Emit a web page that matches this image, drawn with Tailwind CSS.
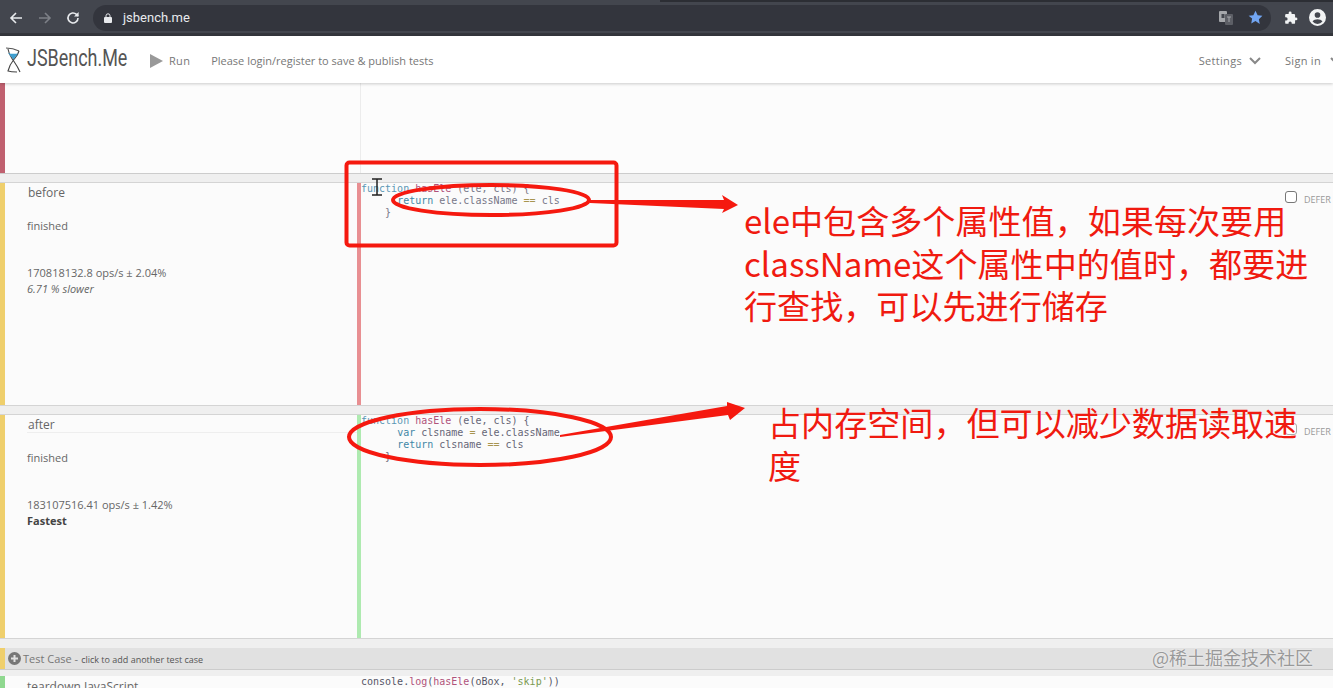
<!DOCTYPE html>
<html lang="zh">
<head>
  <meta charset="UTF-8" />
  <title>JSBench.Me</title>
  <script src="https://cdn.jsdelivr.net/npm/@tailwindcss/browser@4"></script>
</head>
<body class="relative w-[1333px] h-[688px] overflow-hidden bg-[#efefef] font-['Open_Sans',sans-serif] text-[#666]">

  <!-- browser bar -->
  <div class="relative h-[36px] bg-[#43464e] border-b-[3px] border-[#34363c] flex items-center">
    <div class="absolute right-0 top-0 w-[673px] h-[2px] bg-[#2c2e34]"></div>
    <div class="w-[93px] flex items-center pt-[2px]">
      <svg class="ml-[9px]" width="14" height="14" viewBox="0 0 14 14" fill="none" stroke="#e8eaed" stroke-width="1.6"><path d="M13 7H2M7 2 2 7l5 5"/></svg>
      <svg class="ml-[15px]" width="14" height="14" viewBox="0 0 14 14" fill="none" stroke="#7d8087" stroke-width="1.6"><path d="M1 7h11M7 2l5 5-5 5"/></svg>
      <svg class="ml-[14px]" width="14" height="14" viewBox="0 0 14 14" fill="none" stroke="#e8eaed" stroke-width="1.6"><path d="M12 7a5 5 0 1 1-1.5-3.6L12 5"/><path d="M12.6 1v4.6H8" fill="#e8eaed" stroke="none"/></svg>
    </div>
    <div class="w-[1178px] h-[26px] mt-[2px] rounded-full bg-[#33353d] flex items-center pl-[11px]">
      <svg width="8" height="10" viewBox="0 0 8 10"><path d="M1 4h6a1 1 0 0 1 1 1v4a1 1 0 0 1-1 1H1a1 1 0 0 1-1-1V5a1 1 0 0 1 1-1z" fill="#e8eaed"/><path d="M2 4V2.800a2 2 0 0 1 4 0V4" fill="none" stroke="#e8eaed"/></svg>
      <span class="ml-[11px] text-[13px] text-[#e8eaed] font-['Roboto',sans-serif]">jsbench.me</span>
      <div class="ml-auto mr-[8px] flex items-center gap-[15px]">
        <svg width="14" height="14" viewBox="0 0 14 14"><rect width="8" height="11" rx="1" fill="#a5a7ab"/><rect x="2.500" y="3" width="3" height="4" fill="#43464e"/><rect x="6" y="3" width="8" height="11" rx="1" fill="#5d5f66"/><path d="M8 6h4M10 6v5" stroke="#a5a7ab"/></svg>
        <svg width="15" height="15" viewBox="0 0 24 24" fill="#72a5f2"><path d="m12 1 3.400 7.200 7.600 1-5.600 5.400 1.400 7.800L12 17.600l-6.800 3.800 1.400-7.800L1 9.200l7.600-1z"/></svg>
      </div>
    </div>
    <svg class="ml-[13px] mt-[2px]" width="14" height="14" viewBox="0 0 24 24" fill="#f1f3f4"><path d="M20.500 11H19V7a2 2 0 0 0-2-2h-4V3.500a2.500 2.500 0 0 0-5 0V5H4a2 2 0 0 0-2 2v3.800h1.500a2.700 2.700 0 0 1 0 5.400H2V20a2 2 0 0 0 2 2h3.800v-1.500a2.700 2.700 0 0 1 5.400 0V22H17a2 2 0 0 0 2-2v-4h1.500a2.500 2.500 0 0 0 0-5z"/></svg>
    <svg class="ml-[11px] mt-[2px]" width="17" height="17" viewBox="0 0 24 24" fill="#f1f3f4"><path d="M12 0a12 12 0 1 0 0 24 12 12 0 0 0 0-24zm0 4.500a4 4 0 1 1 0 8 4 4 0 0 1 0-8zm0 16.500a9 9 0 0 1-7-3.400c1.200-2 4.400-3 7-3s5.800 1 7 3a9 9 0 0 1-7 3.400z"/></svg>
  </div>

  <!-- site nav -->
  <nav class="h-[47px] bg-white shadow-[0_1px_3px_rgba(0,0,0,0.2)] relative z-10 flex items-center pt-[3px] text-[11px] tracking-[0.3px] text-[#777]">
    <svg class="ml-[5px] mb-[3px]" width="17" height="26" viewBox="0 0 17 26" fill="none">
      <path d="M1 1c4 0 9 1 13 3" stroke="#555" stroke-width="1.200"/>
      <path d="M3 2c1 6 3 8 5 11 2 3 5 7 7 12M14 4c-1 4-3 6-5.500 9C6 16 4 20 3 24 6 25 9 25 12 25" stroke="#444" stroke-width="1.100"/>
      <path d="M3 6c3 1 7 1 10 .5L8.500 12.500z" fill="#3f9fd0"/>
    </svg>
    <span class="ml-[5px] w-[101px] mb-[5px] inline-block origin-left scale-x-[0.78] text-[23px] leading-[30px] whitespace-nowrap text-[#555] font-['Roboto',sans-serif] tracking-normal">JSBench.Me</span>
    <svg class="ml-[22px]" width="13" height="14" viewBox="0 0 13 14"><path d="M0 0l13 7-13 7z" fill="#999"/></svg>
    <span class="ml-[6px]">Run</span>
    <span class="ml-[21px] tracking-normal">Please login/register to save &amp; publish tests</span>
    <span class="ml-auto">Settings</span>
    <svg class="ml-[7px]" width="12" height="8" viewBox="0 0 12 8" fill="none" stroke="#888" stroke-width="2"><path d="m1 1 5 5 5-5"/></svg>
    <span class="ml-[24px]">Sign in</span>
    <svg class="ml-[9px] mr-[-9px]" width="12" height="8" viewBox="0 0 12 8" fill="none" stroke="#888" stroke-width="2"><path d="m1 1 5 5 5-5"/></svg>
  </nav>

  <!-- empty setup row -->
  <section class="h-[91px] flex bg-[#fcfcfc] border-b border-[#ccc]">
    <div class="w-[5px] bg-[#c0606f]"></div>
    <div class="w-[356px] border-r border-[#ececec]"></div>
  </section>

  <!-- before -->
  <section class="mt-[8px] h-[224px] flex bg-[#fbfbfb] border-y border-[#d4d4d4]">
    <div class="w-[5px] bg-[#efcf6c]"></div>
    <div class="w-[352px] pl-[22px] text-[11px] leading-[16px]">
      <div class="pl-px pt-px h-[18px] text-[12px] leading-[18px]">before</div>
      <div class="mt-[17px]">finished</div>
      <div class="mt-[31px]">170818132.8 ops/s ± 2.04%</div>
      <div class="italic">6.71 % slower</div>
    </div>
    <div class="w-[4px] bg-[#e88f92]"></div>
    <pre class="flex-1 font-['DejaVu_Sans_Mono',monospace] text-[10px] leading-[12px] text-[#778]"><span class="text-[#5a97b5]">function</span> <span class="text-[#b0527a]">hasEle</span> (ele, cls) {
      <span class="text-[#3f87a6]">return</span> ele.className <span class="text-[#a8954f]">==</span> cls
    }</pre>
    <div class="w-[48px] shrink-0 pt-[8px] flex items-start text-[9px] text-[#999]">
      <input type="checkbox" class="w-[12px] h-[12px] appearance-none border border-[#777] rounded-[3px] bg-white" />
      <span class="ml-[7px] mt-[2px]">DEFER</span>
    </div>
  </section>

  <!-- after -->
  <section class="mt-[8px] h-[225px] flex bg-[#fbfbfb] border-y border-[#d4d4d4]">
    <div class="w-[5px] bg-[#efcf6c]"></div>
    <div class="w-[352px] pl-[22px] text-[11px] leading-[16px]">
      <div class="pl-px pt-px h-[18px] text-[12px] leading-[18px] border-b border-[#eee]">after</div>
      <div class="mt-[17px]">finished</div>
      <div class="mt-[31px]">183107516.41 ops/s ± 1.42%</div>
      <div class="font-bold text-[#444]">Fastest</div>
    </div>
    <div class="w-[4px] bg-[#aeeab0]"></div>
    <pre class="flex-1 font-['DejaVu_Sans_Mono',monospace] text-[10px] leading-[12px] text-[#667]"><span class="text-[#5a97b5]">function</span> <span class="text-[#b0527a]">hasEle</span> (ele, cls) {
      <span class="text-[#3f87a6]">var</span> clsname <span class="text-[#a8954f]">=</span> ele.className
      <span class="text-[#3f87a6]">return</span> clsname <span class="text-[#a8954f]">==</span> cls
    }</pre>
    <div class="w-[48px] shrink-0 pt-[8px] flex items-start text-[9px] text-[#999]">
      <input type="checkbox" class="w-[12px] h-[12px] appearance-none border border-[#aaa] rounded-[3px] bg-white" />
      <span class="ml-[7px] mt-[2px]">DEFER</span>
    </div>
  </section>

  <!-- add test case -->
  <div class="mt-[9px] h-[22px] flex items-center bg-[#e1e1e1] border-b border-[#ccc]">
    <div class="w-[5px] h-full bg-[#efcf6c]"></div>
    <svg class="ml-[3px]" width="13" height="13" viewBox="0 0 13 13"><circle cx="6.500" cy="6.500" r="6.500" fill="#777"/><path d="M6.500 3v7M3 6.500h7" stroke="#e1e1e1" stroke-width="2"/></svg>
    <span class="ml-[2px] pt-px text-[11px] text-[#777]">Test Case -</span>
    <span class="ml-[3px] pt-[2px] text-[9px] text-[#555]">click to add another test case</span>
  </div>

  <!-- teardown -->
  <section class="mt-[6px] h-[20px] flex bg-[#fbfbfb]">
    <div class="w-[5px] bg-[#8fd88f]"></div>
    <div class="w-[356px] pl-[22px] pt-[3px] text-[12px] leading-[16px]">teardown JavaScript</div>
    <pre class="font-['DejaVu_Sans_Mono',monospace] text-[10px] leading-[12px] text-[#556]">console.<span class="text-[#b0527a]">log</span>(<span class="text-[#b0527a]">hasEle</span>(oBox, <span class="text-[#7a9a50]">'skip'</span>))</pre>
  </section>

  <!-- red annotations drawn on top of the screenshot -->
  <svg class="absolute left-0 top-0 z-20" width="1333" height="688" viewBox="0 0 1333 688" fill="none" stroke="#f5190f" stroke-width="4">
    <rect x="346.500" y="162.500" width="270" height="83" rx="3"/>
    <ellipse cx="491" cy="200" rx="98" ry="15"/>
    <ellipse cx="480" cy="437" rx="131" ry="28"/>
    <polygon points="590,200 724,200 722,195 738,205 722,213 724,209 590,203" fill="#f5190f" stroke="none"/>
    <polygon points="560,435 727,406 727,402 745,408 730,420 728,415 560,437" fill="#f5190f" stroke="none"/>
    <path d="M372 179h10M377 179v16M372 195h10" stroke="#222" stroke-width="1.500"/>
  </svg>
  <p class="absolute z-20 left-[744px] top-[199px] w-[580px] text-[33.100px] leading-[42.500px] text-[#f01a10] font-['Noto_Sans_CJK_SC',sans-serif]">ele中包含多个属性值，如果每次要用className这个属性中的值时，都要进行查找，可以先进行储存</p>
  <p class="absolute z-20 left-[768px] top-[401px] w-[535px] text-[33.100px] leading-[43px] text-[#f01a10] font-['Noto_Sans_CJK_SC',sans-serif]">占内存空间，但可以减少数据读取速度</p>
  <span class="absolute z-20 left-[1152px] top-[644px] text-[18px] leading-[26px] text-[#999] font-['Noto_Sans_CJK_SC',sans-serif] [text-shadow:0_0_2px_#fff]">@稀土掘金技术社区</span>
</body>
</html>
